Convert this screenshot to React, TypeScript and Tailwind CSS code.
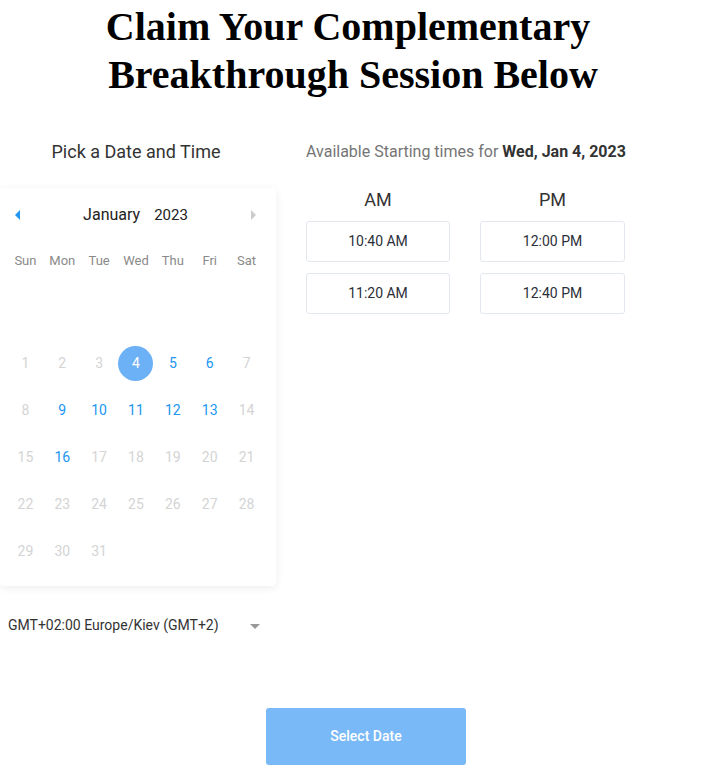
import React from "react";

const weeks: (number | null)[][] = [
  [null, null, null, null, null, null, null],
  [1, 2, 3, 4, 5, 6, 7],
  [8, 9, 10, 11, 12, 13, 14],
  [15, 16, 17, 18, 19, 20, 21],
  [22, 23, 24, 25, 26, 27, 28],
  [29, 30, 31, null, null, null, null],
];
const available = new Set([5, 6, 9, 10, 11, 12, 13, 16]);
const days = ["Sun", "Mon", "Tue", "Wed", "Thu", "Fri", "Sat"];

export default function App() {
  return (
    <div className="w-[719px] min-h-[771px] bg-white font-['Roboto',sans-serif] text-[#333]">
      <h1 className="pt-[3px] w-[706px] text-center font-['Liberation_Serif',serif] font-bold text-[40px] leading-[48px] text-black">
        Claim Your Complementary{"\u00a0"}
        <br />
        Breakthrough Session Below
      </h1>

      <div className="mt-[41px] flex gap-[30px]">
        {/* left column */}
        <div className="w-[276px]">
          <div className="pr-[4px] text-center text-[18px] leading-[24px] text-[#333]">Pick a Date and Time</div>
          <div className="mt-[24px] rounded-[4px] bg-white shadow-[0_2px_10px_rgba(0,0,0,0.07)] pb-[11px] pl-[7px] pr-[11px]">
            <div className="h-[54px] flex items-center justify-between">
              <svg width="5" height="10" viewBox="0 0 5 10" className="ml-[8px]">
                <polygon points="5,0 5,10 0,5" fill="#2196f3" />
              </svg>
              <div className="flex items-baseline gap-[14px] text-[15px] text-[#222]">
                <span className="text-[16px]">January</span>
                <span>2023</span>
              </div>
              <svg width="5" height="10" viewBox="0 0 5 10" className="mr-[9px]">
                <polygon points="0,0 0,10 5,5" fill="#cccccc" />
              </svg>
            </div>
            <div className="grid grid-cols-7 h-[38px] items-center text-[13px] text-[#8a8a8a]">
              {days.map((d) => (
                <div key={d} className="text-center">
                  {d}
                </div>
              ))}
            </div>
            <div className="mt-[13px]">
              {weeks.map((w, i) => (
                <div key={i} className="grid grid-cols-7 h-[47px] items-center text-[14px]">
                  {w.map((d, j) => (
                    <div key={j} className="flex justify-center">
                      {d === null ? null : d === 4 ? (
                        <div className="w-[35px] h-[35px] rounded-full bg-[#6cb1f6] text-white flex items-center justify-center">
                          4
                        </div>
                      ) : (
                        <span className={available.has(d) ? "text-[#2196f3]" : "text-[#d4d4d4]"}>{d}</span>
                      )}
                    </div>
                  ))}
                </div>
              ))}
            </div>
          </div>
          <div className="mt-[29px] flex items-center justify-between pl-[8px] pr-[16px] h-[20px]">
            <span className="text-[14px] text-[#333]">GMT+02:00 Europe/Kiev (GMT+2)</span>
            <svg width="10" height="5" viewBox="0 0 10 5" className="mt-[3px]">
              <polygon points="0,0 10,0 5,5" fill="#999999" />
            </svg>
          </div>
        </div>

        {/* right column */}
        <div className="w-[330px]">
          <div className="text-[16px] leading-[24px] text-[#757575] whitespace-nowrap">
            Available Starting times for <span className="font-bold text-[#333]">Wed, Jan 4, 2023</span>
          </div>
          <div className="mt-[24px] flex gap-[30px]">
            <div className="w-[144px]">
              <div className="text-center text-[18px] leading-[24px] text-[#333]">AM</div>
              <div className="mt-[9px] flex flex-col gap-[11px]">
                {["10:40 AM", "11:20 AM"].map((t) => (
                  <div key={t} className="h-[41px] rounded-[3px] border border-[#e3e8ef] flex items-center justify-center text-[14px] text-[#2b2f3a]">
                    {t}
                  </div>
                ))}
              </div>
            </div>
            <div className="w-[145px]">
              <div className="text-center text-[18px] leading-[24px] text-[#333]">PM</div>
              <div className="mt-[9px] flex flex-col gap-[11px]">
                {["12:00 PM", "12:40 PM"].map((t) => (
                  <div key={t} className="h-[41px] rounded-[3px] border border-[#e3e8ef] flex items-center justify-center text-[14px] text-[#2b2f3a]">
                    {t}
                  </div>
                ))}
              </div>
            </div>
          </div>
        </div>
      </div>

      <button className="mt-[73px] ml-[266px] w-[200px] h-[57px] rounded-[3px] bg-[#7ab9f7] text-white text-[14px] font-medium">
        Select Date
      </button>
    </div>
  );
}
